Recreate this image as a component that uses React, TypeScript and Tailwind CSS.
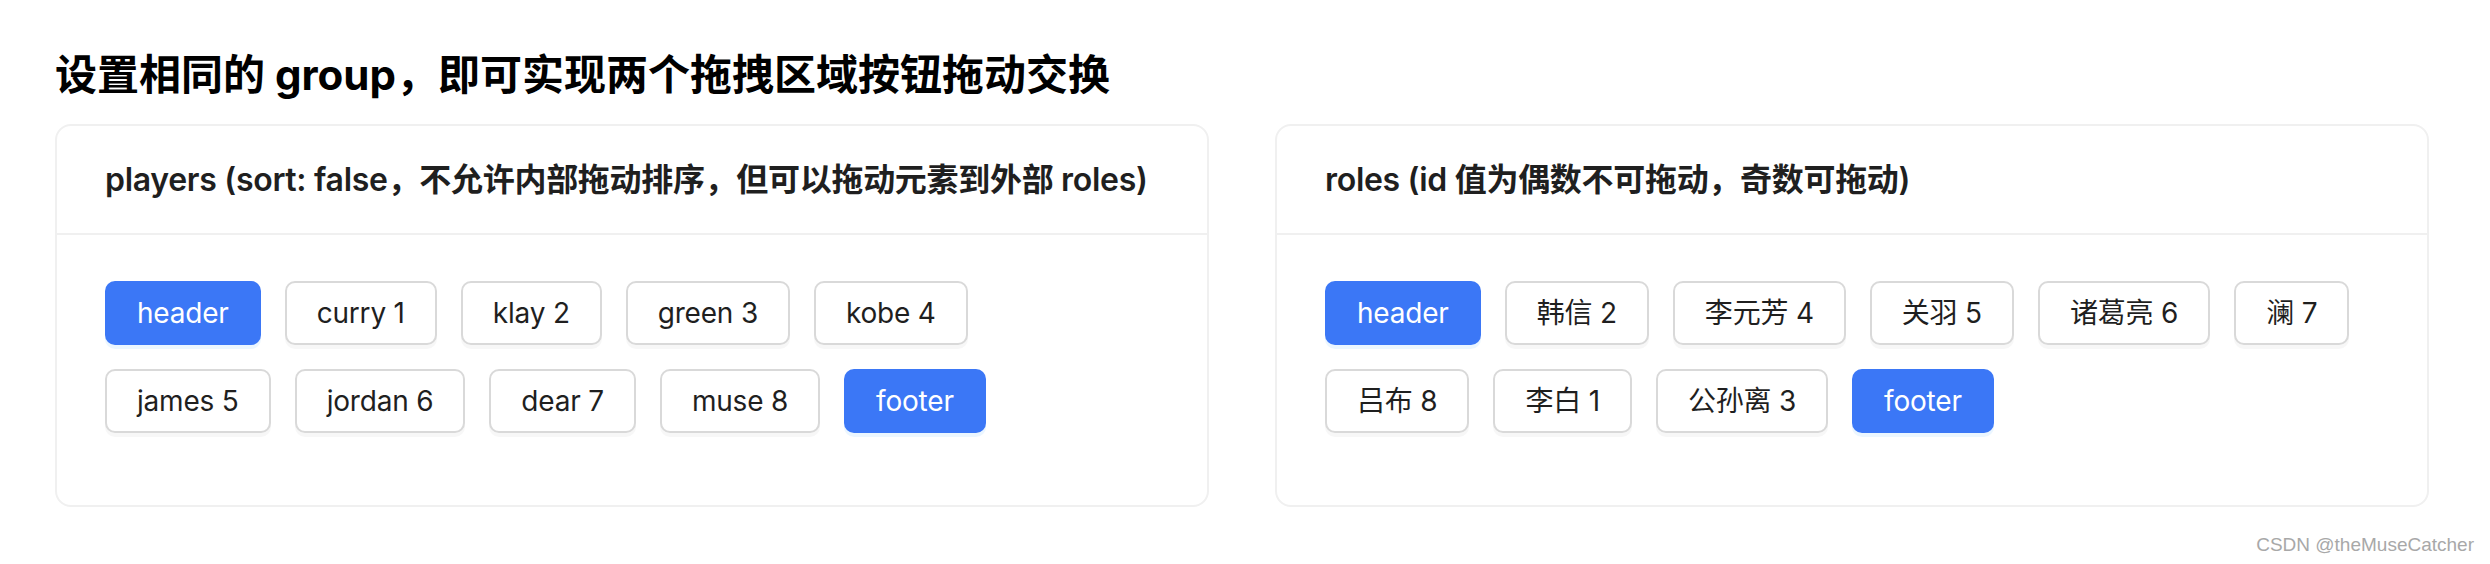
import React from "react";

const players = ["header", "curry 1", "klay 2", "green 3", "kobe 4", "james 5", "jordan 6", "dear 7", "muse 8", "footer"];
const roles = ["header", "韩信 2", "李元芳 4", "关羽 5", "诸葛亮 6", "澜 7", "吕布 8", "李白 1", "公孙离 3", "footer"];

function Btn({ label }: { label: string }) {
  const primary = label === "header" || label === "footer";
  return primary ? (
    <div className="mr-[24px] mb-[24px] h-[64px] px-[32px] flex items-center rounded-[10px] bg-[#3b77f6] text-white text-[28px] tracking-[-0.2px] shadow-[0_4px_0_rgba(5,145,255,0.08)]">
      {label}
    </div>
  ) : (
    <div className="mr-[24px] mb-[24px] h-[64px] px-[30px] flex items-center rounded-[10px] border-2 border-[#d9d9d9] bg-white text-[#1f1f1f] text-[28px] tracking-[-0.2px] shadow-[0_4px_0_rgba(0,0,0,0.03)]">
      {label}
    </div>
  );
}

function Card({ title, items }: { title: string; items: string[] }) {
  return (
    <div className="border-2 border-[#f0f0f0] rounded-[16px] bg-white">
      <div className="h-[109px] px-[48px] flex items-center border-b-2 border-[#f0f0f0] text-[32px] font-semibold text-[#1f1f1f] whitespace-nowrap tracking-[-0.3px]">
        {title}
      </div>
      <div className="pt-[46px] pb-[48px] px-[48px]">
        <div className="flex flex-wrap">
          {items.map((it) => (
            <Btn key={it} label={it} />
          ))}
        </div>
      </div>
    </div>
  );
}

export default function App() {
  return (
    <div
      className="relative h-[564px] w-full bg-white pl-[55px] pr-[61px]"
      style={{ fontFamily: 'Inter, "Noto Sans CJK SC", sans-serif' }}
    >
      <div className="pt-[46px] h-[103px] flex items-start">
        <h2 className="text-[42px] leading-[58px] font-bold text-black whitespace-nowrap">
          设置相同的 group，即可实现两个拖拽区域按钮拖动交换
        </h2>
      </div>
      <div className="mt-[21px] grid grid-cols-2 gap-x-[66px]">
        <Card title="players (sort: false，不允许内部拖动排序，但可以拖动元素到外部 roles)" items={players} />
        <Card title="roles (id 值为偶数不可拖动，奇数可拖动)" items={roles} />
      </div>
      <div
        className="absolute right-[16px] bottom-[5px] text-[19px] text-[#a8a8a8]"
        style={{ fontFamily: '"Liberation Sans", Arial, sans-serif' }}
      >
        CSDN @theMuseCatcher
      </div>
    </div>
  );
}
